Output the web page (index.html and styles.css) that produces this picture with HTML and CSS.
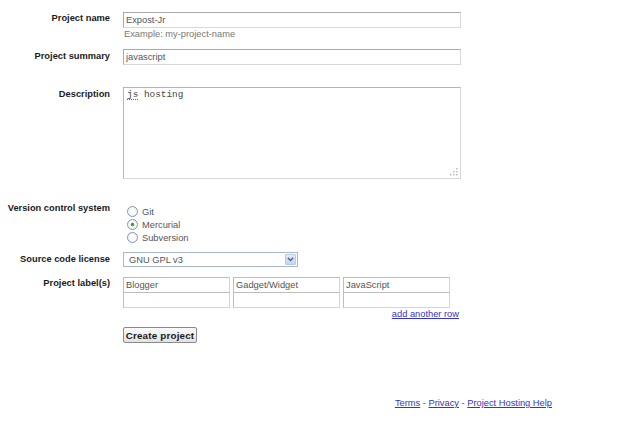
FILE: index.html
```html
<!DOCTYPE html>
<html lang="en">
<head>
    <meta charset="UTF-8">
    <title>Create a new project</title>
    <link rel="stylesheet" href="styles.css">
</head>
<body>
    <form class="project-form">
        <label class="field-label label-name">Project name</label>
        <div class="field field-name">
            <input type="text" class="text-input" value="Expost-Jr">
            <div class="hint">Example: my-project-name</div>
        </div>

        <label class="field-label label-summary">Project summary</label>
        <div class="field field-summary">
            <input type="text" class="text-input" value="javascript">
        </div>

        <label class="field-label label-description">Description</label>
        <div class="field field-description">
            <div class="textarea"><span class="misspelt">js</span> hosting<svg class="grip" width="8" height="8" viewBox="0 0 8 8"><rect x="6" y="0" width="1.5" height="1.5"/><rect x="3" y="3" width="1.5" height="1.5"/><rect x="6" y="3" width="1.5" height="1.5"/><rect x="0" y="6" width="1.5" height="1.5"/><rect x="3" y="6" width="1.5" height="1.5"/><rect x="6" y="6" width="1.5" height="1.5"/></svg></div>
        </div>

        <label class="field-label label-vcs">Version control system</label>
        <div class="field field-vcs">
            <label class="radio"><input type="radio" name="vcs"> Git</label>
            <label class="radio"><input type="radio" name="vcs" checked> Mercurial</label>
            <label class="radio"><input type="radio" name="vcs"> Subversion</label>
        </div>

        <label class="field-label label-license">Source code license</label>
        <div class="field field-license">
            <div class="select-wrap">
                <select class="select">
                    <option>GNU GPL v3</option>
                </select>
                <span class="select-arrow">
                    <svg width="7" height="5" viewBox="0 0 7 5"><path d="M0.8 0.8 L3.5 3.5 L6.2 0.8" fill="none" stroke="#4a5f8c" stroke-width="1.4"/></svg>
                </span>
            </div>
        </div>

        <label class="field-label label-tags">Project label(s)</label>
        <div class="field field-tags">
            <div class="tag-grid">
                <input type="text" class="tag-input" value="Blogger">
                <input type="text" class="tag-input" value="Gadget/Widget">
                <input type="text" class="tag-input" value="JavaScript">
                <input type="text" class="tag-input row-two">
                <input type="text" class="tag-input row-two">
                <input type="text" class="tag-input row-two">
            </div>
            <div class="add-row"><a href="#">add another row</a></div>
            <button type="submit" class="create-btn">Create project</button>
        </div>
    </form>

    <div class="footer">
        <a href="#">Terms</a> - <a href="#">Privacy</a> - <a href="#">Project Hosting Help</a>
    </div>
</body>
</html>
```

FILE: styles.css
```css
body {
    margin: 0;
    font-family: 'Liberation Sans', Arial, sans-serif;
    font-size: 9.3px;
    color: #222;
    background-color: white;
}
.project-form {
    display: grid;
    grid-template-columns: 110px 338px;
    column-gap: 13px;
    padding-top: 12px;
}
.field-label {
    font-weight: bold;
    text-align: right;
    line-height: 12px;
    color: #1a1a1a;
}
.label-name {
    padding-top: 0;
}
.label-summary {
    padding-top: 1px;
}
.label-description {
    padding-top: 1px;
}
.label-vcs {
    padding-top: 0;
}
.label-license {
    padding-top: 1px;
}
.label-tags {
    padding-top: 0;
}
.field {
    display: flex;
    flex-direction: column;
    align-items: flex-start;
}
.field-name {
    margin-bottom: 9px;
}
.field-summary {
    margin-bottom: 22px;
}
.field-description {
    margin-bottom: 23px;
}
.field-vcs {
    padding-top: 3px;
    margin-bottom: 8px;
}
.field-license {
    margin-bottom: 10px;
}
.text-input {
    width: 338px;
    height: 16px;
    box-sizing: border-box;
    margin: 0;
    padding: 0 2px;
    border: 1px solid;
    border-color: #a9a9a9 #d8d8d8 #d8d8d8 #a9a9a9;
    font-family: 'Liberation Sans', Arial, sans-serif;
    font-size: 9.3px;
    color: #555;
    outline: none;
}
.hint {
    color: #777;
    line-height: 12px;
    padding-left: 1px;
}
.textarea {
    position: relative;
    width: 338px;
    height: 92px;
    box-sizing: border-box;
    padding: 1px 3px;
    border: 1px solid;
    border-color: #b5b5b5 #d8d8d8 #d8d8d8 #b5b5b5;
    font-family: 'Liberation Mono', 'Courier New', monospace;
    font-size: 9.4px;
    line-height: 11px;
    color: #444;
}
.misspelt {
    text-decoration: underline dotted #d83030;
    text-decoration-thickness: 1px;
    text-underline-offset: 2px;
}
.grip {
    position: absolute;
    right: 2px;
    bottom: 2px;
    fill: #bdbdbd;
}
.radio {
    display: flex;
    align-items: center;
    height: 13px;
    color: #555;
    padding-left: 4px;
}
.radio input {
    appearance: none;
    width: 11px;
    height: 11px;
    margin: 0 4px 0 0;
    border: 1px solid #8597b0;
    border-radius: 50%;
    background: radial-gradient(circle at 50% 50%, #ffffff 30%, #e6e9ee 100%);
}
.radio input:checked {
    background: radial-gradient(circle at 50% 50%, #2f9a2f 0, #4fb84f 25%, #ffffff 35%, #e6e9ee 100%);
}
.select-wrap {
    position: relative;
    width: 175px;
    height: 15px;
}
.select {
    appearance: none;
    width: 175px;
    height: 15px;
    box-sizing: border-box;
    margin: 0;
    padding: 0 0 0 5px;
    border: 1px solid #a7b7cc;
    border-radius: 0;
    background-color: white;
    font-family: 'Liberation Sans', Arial, sans-serif;
    font-size: 9.3px;
    color: #555;
    outline: none;
}
.select-arrow {
    position: absolute;
    top: 2px;
    right: 2px;
    width: 11px;
    height: 11px;
    box-sizing: border-box;
    display: flex;
    align-items: center;
    justify-content: center;
    background: linear-gradient(#e4ecfb, #c4d4f2);
    border: 1px solid #b9c9e6;
    border-radius: 1px;
}
.tag-grid {
    display: grid;
    grid-template-columns: 107px 107px 107px;
    column-gap: 3px;
}
.tag-input {
    width: 107px;
    height: 16px;
    box-sizing: border-box;
    margin: 0;
    padding: 0 2px;
    border: 1px solid;
    border-color: #bdbdbd #d5d5d5 #d5d5d5 #bdbdbd;
    font-family: 'Liberation Sans', Arial, sans-serif;
    font-size: 9.3px;
    color: #555;
    outline: none;
}
.row-two {
    margin-top: -1px;
}
.add-row {
    width: 336px;
    text-align: right;
    line-height: 12px;
}
.add-row a, .footer a {
    color: #3434c8;
    text-decoration: underline;
}
.create-btn {
    margin-top: 7px;
    width: 74px;
    height: 16px;
    padding: 0;
    border: 1px solid #8a8a8a;
    border-radius: 2px;
    background: linear-gradient(#fbfbfb, #e2e2e2);
    font-family: 'Liberation Sans', Arial, sans-serif;
    font-size: 9.8px;
    font-weight: bold;
    letter-spacing: 0.2px;
    color: #1a1a1a;
}
.footer {
    margin-top: 54px;
    text-align: right;
    padding-right: 88px;
    line-height: 12px;
    color: #555;
}
```
